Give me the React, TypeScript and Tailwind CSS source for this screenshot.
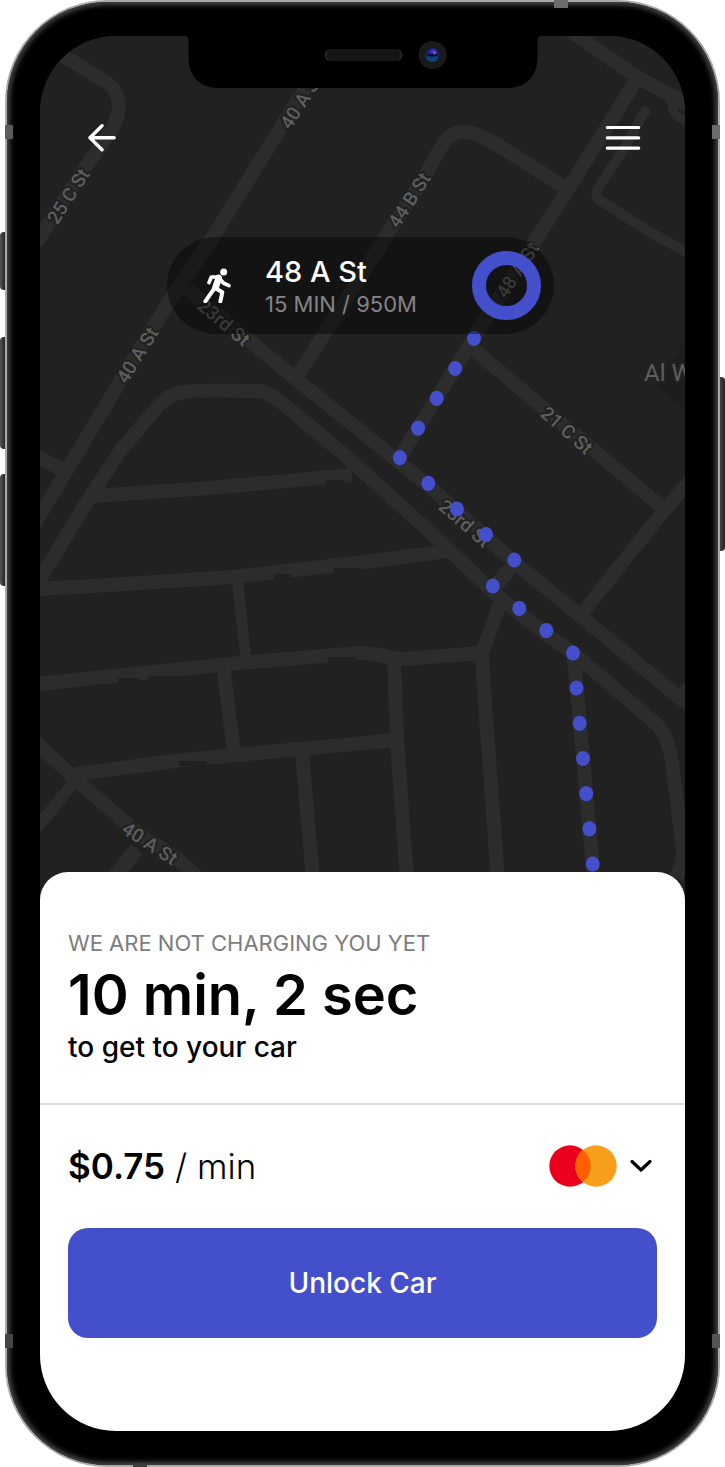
import React from "react";

const ROADS: { d: string; w?: number }[] = [
  { d: "M30 36 L62 55 L106 82 C121 92 122 110 113 127 L85 168 L36 243" },
  { d: "M318 68 L280 129 L216 232 L167 305 L133 360 L73 460 L34 525" },
  { d: "M187 289 L297 380 L429 486 L514 562 L583 618 L654 677 L690 706" },
  { d: "M36 586 L88 500 L121 450 L153 412 C167 396 173 393 184 392 C203 389 233 391 257 391 C266 391 273 396 281 402 L347 457 L442 543 L493 592 L547 635 L573 653 L606 681 L652 720 C666 733 670 746 672 762 L683 850 Q683 864 676 878" },
  { d: "M93 496 L210 488 L352 475" },
  { d: "M36 589 L93 586 L233 577 L365 562 L447 551" },
  { d: "M237 577 L246 660", w: 11 },
  { d: "M36 684 L240 663 L358 653 C380 652 388 659 402 659 L482 653" },
  { d: "M223 665 L234 752" },
  { d: "M75 774 L183 760 L300 749 L397 740" },
  { d: "M302 752 L313 880" },
  { d: "M394 659 L397 740 L407 880" },
  { d: "M502 598 L482 653 L484 690 L498 880" },
  { d: "M490 592 L513 565", w: 15 },
  { d: "M573 653 L577 690 L594 880" },
  { d: "M36 742 L75 779 L125 822 Q138 835 155 844 C172 853 184 864 198 878" },
  { d: "M73 783 L36 829", w: 12 },
  { d: "M137 849 L112 880", w: 15 },
  { d: "M297 377 L385 238 L427 172 L441 147 C449 133 460 128 478 135 C490 139 500 147 512 154 L566 188" },
  { d: "M635 82 L563 197 L485 320 L400 457" },
  { d: "M566 28 L637 77 L690 106" },
  { d: "M672 98 C670 112 676 117 690 123", w: 9 },
  { d: "M645 111 L622 152 Q600 184 597 191 C594 199 601 200 606 204 L648 231 L690 254", w: 10 },
  { d: "M472 348 L547 411 L603 458 L664 509" },
  { d: "M692 479 L662 513 L583 612" },
  { d: "M36 456 L63 470" },
  { d: "M677 698 L690 683", w: 10 },
];

const GAPS = [
  [274, 574, 17, 6], [334, 568, 26, 6], [118, 678, 21, 6], [148, 676, 29, 4],
  [328, 657, 28, 5], [179, 761, 28, 5], [325, 480, 20, 6],
];

const LABELS: { text: string; x: number; y: number; r: number }[] = [
  { text: "25 C St", x: 68, y: 196, r: -57 },
  { text: "40 A St", x: 301, y: 101, r: -57 },
  { text: "44 B St", x: 409, y: 200, r: -57 },
  { text: "40 A St", x: 137, y: 355, r: -58 },
  { text: "23rd St", x: 224, y: 322, r: 40 },
  { text: "23rd St", x: 465, y: 523, r: 41 },
  { text: "21 C St", x: 567, y: 430, r: 41 },
  { text: "48 A St", x: 517, y: 270, r: -57 },
  { text: "40 A St", x: 150, y: 843, r: 33 },
];

const ROUTE = [
  [474, 338.5], [455.2, 368.5], [436.7, 398.4], [418.1, 428.1], [399.8, 457.6], [428.3, 483.4],
  [457, 509], [486, 534.6], [514.3, 560], [492.8, 586], [519.3, 608.3], [546.3, 630.6],
  [573, 653], [576.4, 688], [579.6, 723.3], [583, 758.5], [586.2, 793.7], [589.4, 828.8], [592.7, 864],
];

function StreetMap() {
  return (
    <svg
      className="absolute inset-x-0 top-0 h-[900px] w-full"
      viewBox="40 36 645 900"
      preserveAspectRatio="xMidYMin slice"
      role="img"
      aria-label="Walking route"
    >
      <rect x="-400" y="36" width="1600" height="900" fill="#212121" />
      <path d="M685 343 L656 386 L685 408 Z" fill="#1d1d1d" />
      <g fill="none" stroke="#2c2c2c" strokeLinejoin="round">
        {ROADS.map((r, i) => (
          <path key={i} d={r.d} strokeWidth={r.w ?? 14} />
        ))}
        <path d="M645 111 L640 119" strokeWidth="10" strokeLinecap="round" />
      </g>
      {GAPS.map(([x, y, w, h], i) => (
        <rect key={i} x={x} y={y} width={w} height={h} fill="#212121" />
      ))}
      <g
        className="font-['Roboto',sans-serif] text-[19px] font-medium"
        fill="#5e5e5e"
        stroke="#212121"
        strokeWidth="4"
        strokeLinejoin="round"
        paintOrder="stroke"
      >
        {LABELS.map((l, i) => (
          <text key={i} textAnchor="middle" transform={`translate(${l.x} ${l.y}) rotate(${l.r})`} y="7">
            {l.text}
          </text>
        ))}
        <text x="644" y="381" className="text-[24px] font-normal">
          Al W
        </text>
      </g>
      {ROUTE.map(([x, y], i) => (
        <ellipse key={i} cx={x} cy={y} rx="7" ry="7.6" fill="#444fcb" />
      ))}
    </svg>
  );
}

function Notch() {
  return (
    <svg className="absolute -top-px left-1/2 h-[53px] w-[357px] -translate-x-1/2" viewBox="184 35 357 53" aria-hidden="true">
      <defs>
        <radialGradient id="lens" cx="0.55" cy="0.3" r="0.7">
          <stop offset="0" stopColor="#5a3fd8" />
          <stop offset="0.45" stopColor="#1c1c80" />
          <stop offset="0.75" stopColor="#0a2a55" />
          <stop offset="1" stopColor="#0d4f80" />
        </radialGradient>
      </defs>
      <path d="M184 35 V36 Q188 36 188 40 V57 C188 77 200 88 218 88 H507 C525 88 537 77 537 57 V40 Q537 36 541 36 V35 Z" fill="#000" />
      <rect x="324" y="49" width="78" height="12" rx="6" fill="#151515" />
      <path d="M328 50 Q325 51 325 55 Q325 59 328 60 M398 50 Q401 51 401 55 Q401 59 398 60" fill="none" stroke="#333" />
      <circle cx="432" cy="55" r="14" fill="#1a1a1b" />
      <circle cx="432" cy="55" r="7" fill="url(#lens)" />
      <path d="M426 57 Q432 55 438 57 Q436 61.500 432 61.500 Q428 61.500 426 57" fill="#0d4478" />
      <path d="M426 55 Q432 52 438 55 Q432 58 426 55" fill="#0b0b2c" />
      <circle cx="434" cy="53" r="1.500" fill="#6a55d8" />
    </svg>
  );
}

function WalkIcon() {
  return (
    <svg className="h-[35px] w-7 shrink-0" viewBox="160 144 84 105" aria-hidden="true">
      <circle cx="222" cy="156" r="10.500" fill="#fff" />
      <g fill="none" stroke="#fff" strokeLinecap="round" strokeLinejoin="round">
        <path d="M178 188 L185 171 H207" strokeWidth="11" />
        <path d="M207 173 L192 208 L167 244" strokeWidth="12" />
        <path d="M207 174 L198 202" strokeWidth="20" />
        <path d="M212 178 L221 189 L238 197" strokeWidth="11" />
        <path d="M195 203 L218 217 L212 244" strokeWidth="12" />
      </g>
    </svg>
  );
}

export default function App() {
  return (
    <main className="relative bg-white px-[5px] font-['Inter',sans-serif]">
      <span className="absolute left-0 top-[232px] h-[58px] w-[6px] rounded-l-sm bg-linear-to-r from-[#555] to-[#1c1c1c]" />
      <span className="absolute left-0 top-[337px] h-[112px] w-[6px] rounded-l-sm bg-linear-to-r from-[#555] to-[#1c1c1c]" />
      <span className="absolute left-0 top-[474px] h-[112px] w-[6px] rounded-l-sm bg-linear-to-r from-[#555] to-[#1c1c1c]" />
      <span className="absolute right-0 top-[377px] h-[174px] w-[6px] rounded-r-sm bg-linear-to-l from-[#222] to-[#4c4c4c]" />

      <div className="relative rounded-[102px] bg-[#a9a9a9] p-0.5">
        <div className="rounded-[100px] bg-black px-[33px] py-[34px] shadow-[inset_0_0_5px_3px_#464646]">
          <div className="relative overflow-hidden rounded-[76px] bg-[#212121]">
            <StreetMap />
            <Notch />

            <section className="relative flex min-h-[836px] flex-col">
              <header className="flex items-center justify-between px-10 pt-[82px]">
                <button type="button" aria-label="Back" className="flex h-10 w-11 items-center justify-center">
                  <svg className="h-7 w-7" viewBox="0 0 28 28" fill="none" stroke="#fff" strokeWidth="3.400" strokeLinecap="round" strokeLinejoin="round" aria-hidden="true">
                    <path d="M26.200 13.800 H2 M14 1.800 L2 13.800 L14 25.800" />
                  </svg>
                </button>
                <button type="button" aria-label="Menu" className="flex h-10 w-11 items-center justify-center">
                  <svg className="h-7 w-9" viewBox="0 0 36 28" stroke="#fff" strokeWidth="3.200" strokeLinecap="round" aria-hidden="true">
                    <path d="M2.300 3.500 H33.700 M2.300 13.900 H33.700 M2.300 24.200 H33.700" />
                  </svg>
                </button>
              </header>

              <div className="mt-[79px] flex justify-center pr-1">
                <div className="flex h-[97px] w-[387px] items-center rounded-full bg-black/40 pl-9 pr-[13px]">
                  <WalkIcon />
                  <div className="ml-[34px] flex-1 pt-1">
                    <p className="text-[29px] font-medium leading-8 text-white">48 A St</p>
                    <p className="text-[22px] leading-8 text-[#858585]">15 MIN / 950M</p>
                  </div>
                  <span className="size-[69px] rounded-full border-[14px] border-[#444fcb]" />
                </div>
              </div>
            </section>

            <section className="relative rounded-t-[28px] bg-white">
              <div className="border-b-2 border-[#dedede] px-7 pb-10 pt-[55px]">
                <p className="text-[22px] leading-8 text-[#7d7d7d]">WE ARE NOT CHARGING YOU YET</p>
                <h1 className="text-[56px] font-semibold leading-[72px] text-black">10 min, 2 sec</h1>
                <p className="text-[28px] font-medium leading-8 text-black">to get to your car</p>
              </div>

              <div className="px-7 pb-[93px] pt-[39px]">
                <div className="flex items-center justify-between">
                  <p className="text-[35px] font-light leading-[44px] text-black">
                    <span className="font-semibold">$0.75</span> / min
                  </p>
                  <button type="button" aria-label="Change payment card" className="flex items-center gap-3 pr-1">
                    <svg className="h-[42px] w-[68px]" viewBox="0 0 68 42" aria-hidden="true">
                      <circle cx="21" cy="21" r="20.700" fill="#eb001b" />
                      <circle cx="47" cy="21" r="20.700" fill="#f79e1b" />
                      <path d="M34 4.900 A20.700 20.700 0 0 1 34 37.100 A20.700 20.700 0 0 1 34 4.900 Z" fill="#ff5f00" />
                    </svg>
                    <svg className="h-3.5 w-6" viewBox="0 0 24 14" fill="none" stroke="#000" strokeWidth="3.200" strokeLinecap="round" strokeLinejoin="round" aria-hidden="true">
                      <path d="M3 2.500 L12 11 L21 2.500" />
                    </svg>
                  </button>
                </div>
                <button type="button" className="mt-10 h-[110px] w-full rounded-[20px] bg-[#444fcb] text-[28px] font-medium text-white">
                  Unlock Car
                </button>
              </div>
            </section>
          </div>
        </div>
        <span className="absolute left-0 top-[125px] h-3.5 w-2 bg-[#5c5c5c]" />
        <span className="absolute right-0 top-[125px] h-3.5 w-2 bg-[#6c6c6c]" />
        <span className="absolute bottom-[119px] left-0 h-3.5 w-2 bg-[#444]" />
        <span className="absolute bottom-[119px] right-0 h-3.5 w-2 bg-[#555]" />
        <span className="absolute right-[152px] top-0 h-2 w-3.5 bg-[#6c6c6c]" />
        <span className="absolute bottom-0 left-32 h-1 w-3.5 bg-[#3c3c3c]" />
      </div>
    </main>
  );
}
